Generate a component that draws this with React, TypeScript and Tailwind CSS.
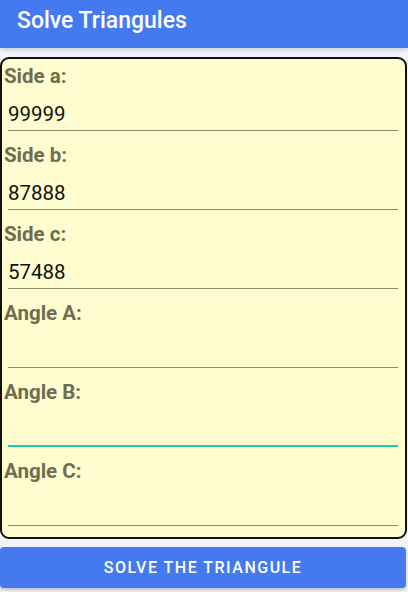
import React from "react";

const fields: { label: string; value: string; focused?: boolean }[] = [
  { label: "Side a:", value: "99999" },
  { label: "Side b:", value: "87888" },
  { label: "Side c:", value: "57488" },
  { label: "Angle A:", value: "" },
  { label: "Angle B:", value: "", focused: true },
  { label: "Angle C:", value: "" },
];

export default function App() {
  return (
    <div
      className="w-[408px] h-[592px] bg-[#f1f3f9] flex flex-col overflow-hidden"
      style={{ fontFamily: "Roboto, 'Liberation Sans', sans-serif" }}
    >
      <div className="h-[48px] bg-[#4579f0] flex items-center pl-[17px] shadow-[0_2px_4px_rgba(0,0,0,0.15)]">
        <span className="text-white text-[23px] font-medium leading-none -mt-[8px]">Solve Triangules</span>
      </div>
      <div className="mt-[9px] mr-[1px] h-[482px] border-2 border-[#111] rounded-[9px] bg-[#fffdd0] pt-[3px] flex flex-col">
        {fields.map((f) => (
          <div key={f.label} className="flex flex-col mb-[10px]">
            <div className="h-[28px] leading-[28px] pl-[2px] text-[20.5px] font-bold text-[#6d6d52]">{f.label}</div>
            <div
              className={
                "mt-[7px] ml-[6px] mr-[7px] h-[34px] flex items-center pt-[2px] text-[20.5px] text-[#111] " +
                (f.focused ? "border-b-2 border-[#1ccf9e]" : "border-b border-[#8c8a6c]")
              }
            >
              {f.value}
            </div>
          </div>
        ))}
      </div>
      <div className="mt-[8px] mr-[2px] h-[41px] bg-[#4579f0] rounded-[4px] flex items-center justify-center shadow-[0_2px_3px_rgba(0,0,0,0.2)]">
        <span className="text-white text-[16px] font-medium tracking-[1.5px]">SOLVE THE TRIANGULE</span>
      </div>
    </div>
  );
}
